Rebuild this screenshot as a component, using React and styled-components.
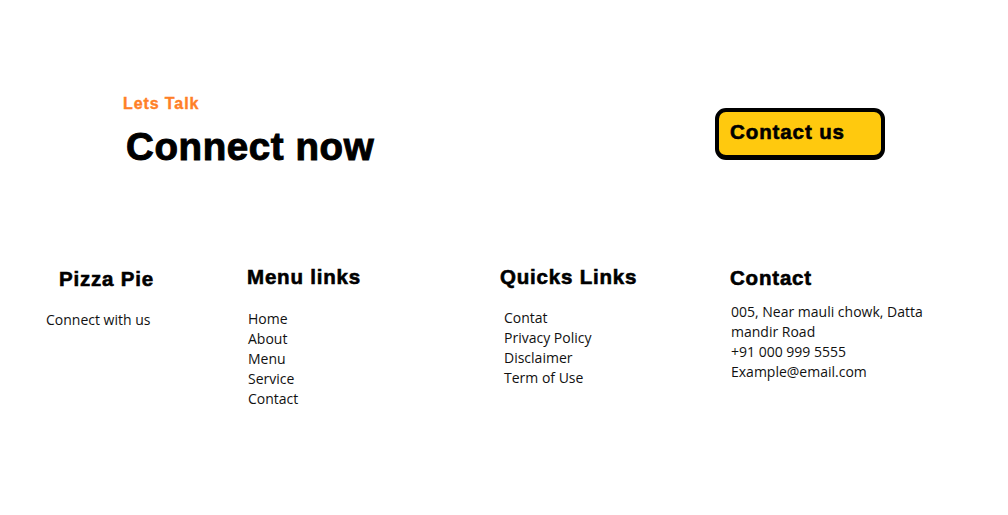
import React from "react";
import styled, { createGlobalStyle } from "styled-components";

const Global = createGlobalStyle`
  html, body { margin: 0; padding: 0; background: #fff; }
  body { font-family: "Open Sans", "Noto Sans", sans-serif; color: #111; }
  * { box-sizing: border-box; }
`;

const Page = styled.div`
  width: 1008px;
  min-height: 515px;
  background: #fff;
`;

const Cta = styled.section`
  display: flex;
  justify-content: space-between;
  align-items: flex-start;
  padding: 94px 123px 0 123px;
  height: 262px;
`;

const CtaText = styled.div`
  display: flex;
  flex-direction: column;
`;

const Eyebrow = styled.span`
  font-family: "Liberation Sans", Arial, sans-serif;
  font-weight: 700;
  font-size: 16px;
  line-height: 20px;
  color: #ff7f27;
  -webkit-text-stroke: 0.4px #ff7f27;
  letter-spacing: 0.9px;
`;

const Headline = styled.h1`
  margin: 11px 0 0 3px;
  font-family: "Liberation Sans", Arial, sans-serif;
  font-weight: 700;
  font-size: 38.5px;
  line-height: 44px;
  letter-spacing: 0.6px;
  color: #000;
  -webkit-text-stroke: 1px #000;
`;

const ContactButton = styled.button`
  margin-top: 14px;
  width: 170px;
  height: 52px;
  padding: 0 0 4px 11px;
  text-align: left;
  background: #ffc90e;
  border: 4px solid #000;
  border-bottom-width: 5px;
  border-radius: 11px;
  font-family: "Liberation Sans", Arial, sans-serif;
  font-weight: 700;
  font-size: 20.5px;
  letter-spacing: 0.9px;
  color: #000;
  -webkit-text-stroke: 0.6px #000;
  cursor: pointer;
`;

const Footer = styled.footer`
  display: grid;
  grid-template-columns: 201px 253px 230px 1fr;
  padding-left: 46px;
`;

const Column = styled.div`
  display: flex;
  flex-direction: column;
`;

const ColTitle = styled.h3`
  margin: 0 0 ${(p) => p.$gap}px ${(p) => p.$indent || 0}px;
  padding-top: ${(p) => p.$top || 0}px;
  font-family: "Liberation Sans", Arial, sans-serif;
  font-weight: 700;
  font-size: 20.5px;
  line-height: 24px;
  letter-spacing: 0.8px;
  color: #000;
  -webkit-text-stroke: 0.6px #000;
`;

const Links = styled.ul`
  list-style: none;
  margin: 0 0 0 ${(p) => p.$indent || 0}px;
  padding: 0;
`;

const LinkItem = styled.li`
  font-size: 14px;
  line-height: 20px;
  color: #111;
`;

const Text = styled.p`
  margin: 0 0 0 ${(p) => p.$indent || 0}px;
  font-size: 14px;
  line-height: 20px;
  color: #111;
  max-width: ${(p) => p.$max || "none"};
`;

export default function App() {
  return (
    <Page>
      <Global />
      <Cta>
        <CtaText>
          <Eyebrow>Lets Talk</Eyebrow>
          <Headline>Connect now</Headline>
        </CtaText>
        <ContactButton>Contact us</ContactButton>
      </Cta>
      <Footer>
        <Column>
          <ColTitle $indent={13} $top={5} $gap={19}>Pizza Pie</ColTitle>
          <Text>Connect with us</Text>
        </Column>
        <Column>
          <ColTitle $top={3} $gap={20}>Menu links</ColTitle>
          <Links $indent={1}>
            <LinkItem>Home</LinkItem>
            <LinkItem>About</LinkItem>
            <LinkItem>Menu</LinkItem>
            <LinkItem>Service</LinkItem>
            <LinkItem>Contact</LinkItem>
          </Links>
        </Column>
        <Column>
          <ColTitle $top={3} $gap={19}>Quicks Links</ColTitle>
          <Links $indent={4}>
            <LinkItem>Contat</LinkItem>
            <LinkItem>Privacy Policy</LinkItem>
            <LinkItem>Disclaimer</LinkItem>
            <LinkItem>Term of Use</LinkItem>
          </Links>
        </Column>
        <Column>
          <ColTitle $top={4} $gap={12}>Contact</ColTitle>
          <Text $indent={1} $max="215px">
            005, Near mauli chowk, Datta mandir Road
            <br />
            +91 000 999 5555
            <br />
            Example@email.com
          </Text>
        </Column>
      </Footer>
    </Page>
  );
}
